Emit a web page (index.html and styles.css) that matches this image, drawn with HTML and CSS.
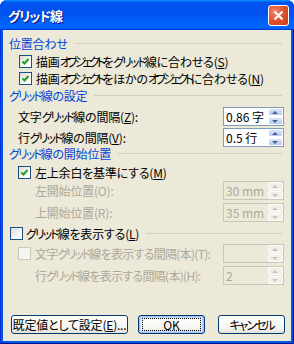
FILE: index.html
```html
<!DOCTYPE html>
<html lang="ja">
    <head>
        <meta charset="UTF-8">
        <title>グリッド線</title>
        <link rel="stylesheet" href="styles.css">
    </head>
    <body>
        <div class="window">
            <div class="titlebar">
                <span class="title">グリッド線</span>
                <span class="close">
                    <svg width="11" height="11" viewBox="0 0 11 11"><path d="M1.5 1.5 L9.5 9.5 M9.5 1.5 L1.5 9.5" stroke="#fff" stroke-width="2.2" fill="none"/></svg>
                </span>
            </div>
            <div class="client">
                <!-- 位置合わせ -->
                <div class="head r1"><span>位置合わせ</span></div>
                <div class="check in2 r2">
                    <span class="box on"><svg width="9" height="9" viewBox="0 0 9 9"><path d="M1.5 4.5 L3.5 6.5 L7.5 2" stroke="#21a121" stroke-width="2" fill="none"/></svg></span>
                    <span>描画<span class="kk">オブジェクト</span>を<span class="k">グリッド</span>線に合わせる(<u>S</u>)</span>
                </div>
                <div class="check in2 r3">
                    <span class="box on"><svg width="9" height="9" viewBox="0 0 9 9"><path d="M1.5 4.5 L3.5 6.5 L7.5 2" stroke="#21a121" stroke-width="2" fill="none"/></svg></span>
                    <span>描画<span class="kk">オブジェクト</span>をほかの<span class="kk">オブジェクト</span>に合わせる(<u>N</u>)</span>
                </div>

                <!-- グリッド線の設定 -->
                <div class="head r4"><span><span class="k">グリッド</span>線の設定</span></div>
                <div class="field in1 r5">
                    <span>文字<span class="k">グリッド</span>線の間隔(<u>Z</u>):</span>
                    <span class="spin"><span class="val">0.86 字</span><span class="arrows"><i class="up"></i><i class="down"></i></span></span>
                </div>
                <div class="field in1 r6">
                    <span>行<span class="k">グリッド</span>線の間隔(<u>V</u>):</span>
                    <span class="spin"><span class="val">0.5 行</span><span class="arrows"><i class="up"></i><i class="down"></i></span></span>
                </div>

                <!-- グリッド線の開始位置 -->
                <div class="head r7"><span><span class="k">グリッド</span>線の開始位置</span></div>
                <div class="check in1 r8">
                    <span class="box on"><svg width="9" height="9" viewBox="0 0 9 9"><path d="M1.5 4.5 L3.5 6.5 L7.5 2" stroke="#21a121" stroke-width="2" fill="none"/></svg></span>
                    <span>左上余白を基準にする(<u>M</u>)</span>
                </div>
                <div class="field in3 off r9">
                    <span>左開始位置(O):</span>
                    <span class="spin"><span class="val">30 mm</span><span class="arrows"><i class="up"></i><i class="down"></i></span></span>
                </div>
                <div class="field in3 off r10">
                    <span>上開始位置(R):</span>
                    <span class="spin"><span class="val">35 mm</span><span class="arrows"><i class="up"></i><i class="down"></i></span></span>
                </div>

                <!-- グリッド線を表示する -->
                <div class="check head-check r11">
                    <span class="box"></span>
                    <span class="text"><span class="k">グリッド</span>線を表示する(<u>L</u>)</span>
                    <span class="rule"></span>
                </div>
                <div class="field in1 off r12">
                    <span class="check"><span class="box"></span><span class="tight">文字<span class="k">グリッド</span>線を表示する間隔(本)(T):</span></span>
                    <span class="spin"><span class="val"></span><span class="arrows"><i class="up"></i><i class="down"></i></span></span>
                </div>
                <div class="field in3 off r13">
                    <span class="tight">行<span class="k">グリッド</span>線を表示する間隔(本)(H):</span>
                    <span class="spin"><span class="val">2</span><span class="arrows"><i class="up"></i><i class="down"></i></span></span>
                </div>

                <div class="buttons">
                    <button class="btn wide">既定値として設定(<u>E</u>)...</button>
                    <button class="btn default"><span>OK</span></button>
                    <button class="btn"><span class="k">キャンセル</span></button>
                </div>
            </div>
        </div>
    </body>
</html>
```

FILE: styles.css
```css
body {
    margin: 0;
    background: #fff;
    font-family: "Noto Sans CJK JP", "Liberation Sans", sans-serif;
    font-size: 12px;
    font-feature-settings: "palt";
    letter-spacing: -0.2px;
    color: #000;
}
u {
    text-decoration: underline;
    text-underline-offset: 1px;
}
/* katakana runs are much narrower in the original UI font */
.k {
    letter-spacing: -2px;
}
.kk {
    letter-spacing: -3.4px;
}
.tight {
    letter-spacing: -0.7px;
}
.window {
    width: 294px;
    height: 344px;
    display: flex;
    flex-direction: column;
    background: #0055e5;
    border-radius: 7px 7px 0 0;
    box-sizing: border-box;
    padding: 0 3px 3px 3px;
    box-shadow: inset -1px -1px #00138c, inset 1px 0 #0831d9;
}
.titlebar {
    height: 30px;
    margin: 0 -3px;
    padding: 0 5px 0 8px;
    display: flex;
    align-items: center;
    border-radius: 7px 7px 0 0;
    background: linear-gradient(to bottom, #0997ff 0%, #0053ee 8%, #0050ee 40%, #0066ff 88%, #0066ff 93%, #005bff 95%, #003dd7 96%, #003dd7 100%);
}
.title {
    color: #fff;
    font-weight: bold;
    font-size: 13px;
    letter-spacing: -1px;
    text-shadow: 1px 1px #0f1089;
}
.close {
    margin-left: auto;
    width: 21px;
    height: 21px;
    box-sizing: border-box;
    border: 1px solid #fff;
    border-radius: 3px;
    background: radial-gradient(circle at 30% 30%, #f0876a 0%, #e2542f 45%, #c83b18 100%);
    display: flex;
    align-items: center;
    justify-content: center;
}
.client {
    flex: 1;
    background: #ece9d8;
    padding: 5px 6px 0 6px;
    display: flex;
    flex-direction: column;
}

/* rows */
.head, .check, .field {
    display: flex;
    align-items: center;
    height: 16px;
    white-space: nowrap;
}
.head {
    color: #0046d5;
}
.head::after {
    content: '';
    flex: 1;
    height: 1px;
    background: #d0d0bf;
    margin: 1px 3px 0 7px;
}
.in1 { padding-left: 9px; }
.in2 { padding-left: 10px; }
.in3 { padding-left: 26px; }
.r1 { margin-top: 0; }
.r2 { margin-top: 2px; }
.r3 { margin-top: 1px; }
.r4 { margin-top: 1px; }
.r5 { margin-top: 5px; }
.r6 { margin-top: 5px; }
.r7 { margin-top: 0; }
.r8 { margin-top: 3px; }
.r9 { margin-top: 2px; }
.r10 { margin-top: 6px; }
.r11 { margin-top: 5px; }
.r12 { margin-top: 4px; }
.r13 { margin-top: 6px; }

.box {
    width: 13px;
    height: 13px;
    box-sizing: border-box;
    border: 1px solid #1c5180;
    background: linear-gradient(135deg, #dcdcd7 0%, #fff 80%);
    margin-right: 4px;
    display: flex;
    align-items: center;
    justify-content: center;
    flex: none;
}
.head-check {
    padding-left: 1px;
}
.head-check .rule {
    flex: 1;
    height: 1px;
    background: #d0d0bf;
    margin: 1px 3px 0 7px;
}
.head-check .box {
    margin-right: 3px;
}
.off {
    color: #aca899;
}
.off .box {
    border-color: #cac8bb;
    background: #f4f4f0;
}

/* spin boxes */
.spin {
    margin-left: auto;
    margin-right: 1px;
    width: 61px;
    height: 19px;
    box-sizing: border-box;
    border: 1px solid #7f9db9;
    background: #fff;
    display: flex;
    align-items: center;
    flex: none;
}
.val {
    flex: 1;
    padding-left: 2px;
    color: #000;
    letter-spacing: 0;
}
.arrows {
    width: 15px;
    height: 17px;
    display: flex;
    flex-direction: column;
    gap: 1px;
}
.arrows i {
    flex: 1;
    position: relative;
    background: linear-gradient(to bottom, #d8e4fd, #b8cbf5);
    border: 1px solid #fff;
    border-radius: 2px;
}
.arrows i::after {
    content: '';
    position: absolute;
    left: 3px;
    top: 2px;
    border-left: 3px solid transparent;
    border-right: 3px solid transparent;
}
.arrows .up::after {
    border-bottom: 3px solid #4d6185;
}
.arrows .down::after {
    border-top: 3px solid #4d6185;
}
.off .spin {
    border-color: #c9c7ba;
    background: #ece9d8;
}
.off .val {
    color: #aca899;
}
.off .arrows i {
    background: #f0efe8;
}
.off .arrows .up::after {
    border-bottom-color: #c9c7ba;
}
.off .arrows .down::after {
    border-top-color: #c9c7ba;
}

/* buttons */
.buttons {
    margin-top: auto;
    margin-bottom: 7px;
    display: flex;
    gap: 9px;
    padding-left: 2px;
}
.btn {
    height: 19px;
    width: 67px;
    box-sizing: border-box;
    border: 1px solid #003c74;
    border-radius: 3px;
    background: linear-gradient(to bottom, #fff 0%, #f6f5f0 70%, #e3e1d6 100%);
    font-family: inherit;
    font-size: 12px;
    font-feature-settings: "palt";
    letter-spacing: -0.2px;
    white-space: nowrap;
    padding: 0;
    color: #000;
    line-height: 15px;
}
.btn.wide {
    width: 117px;
}
.btn.default {
    box-shadow: inset 0 0 0 1px #a8bff5, inset 0 0 0 2px #c9d8fc;
    margin-left: 1px;
    margin-right: 4px;
}
.btn.default span {
    display: block;
    margin: 2px 3px;
    border: 1px dotted #000;
    line-height: 11px;
    letter-spacing: 0;
}
```
